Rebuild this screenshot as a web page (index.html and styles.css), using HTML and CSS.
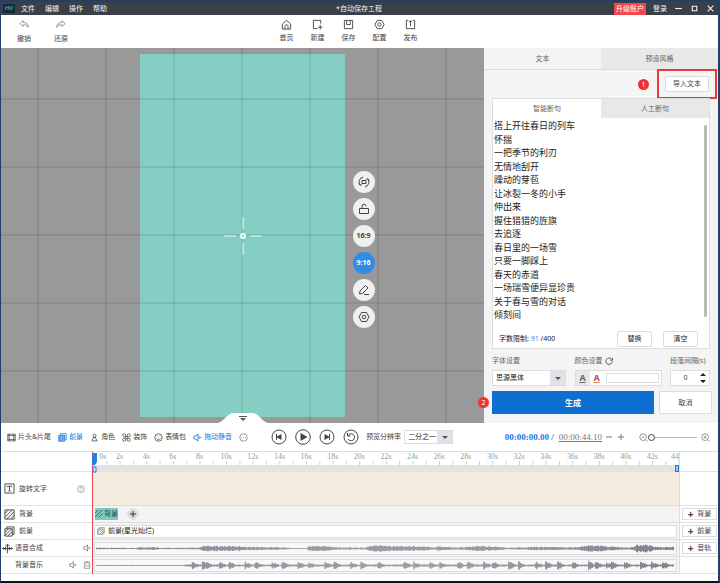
FILE: index.html
```html
<!DOCTYPE html>
<html lang="zh-CN">
<head>
<meta charset="utf-8">
<title>自动保存工程</title>
<link rel="stylesheet" href="styles.css">
</head>
<body>
<svg class="defs" aria-hidden="true">
  <symbol id="i-undo" viewBox="0 0 12 10"><path d="M5 1 1 4.500 5 8V6c3-.3 5 .6 6 3 .2-3.500-2-6-6-6z"/></symbol>
  <symbol id="i-home" viewBox="0 0 12 12"><path d="M1.500 5.500 6 1.500l4.500 4V11h-9zM4.300 11V8a1.700 1.700 0 0 1 3.400 0v3"/></symbol>
  <symbol id="i-new" viewBox="0 0 12 12"><path d="M9.500 5V1.500h-8v9H6M9 6.500v5M6.500 9h5"/></symbol>
  <symbol id="i-save" viewBox="0 0 12 12"><path d="M1.500 1.500h9v9h-9zM4 1.500V6h4V1.500"/></symbol>
  <symbol id="i-gear" viewBox="0 0 12 12"><path d="M3.500 1.500h5L11 6l-2.500 4.500h-5L1 6z"/><circle cx="6" cy="6" r="1.800"/></symbol>
  <symbol id="i-publish" viewBox="0 0 12 12"><path d="M3.500 1.500h-2v9h9v-9h-2M6 8V2M4.300 3.500 6 1.800l1.700 1.700"/></symbol>
  <symbol id="i-speaker" viewBox="0 0 10 10"><path d="M1 3.500h2L5.500 1v8L3 6.500H1zM7.500 3.500v3M9 4.500v1"/></symbol>
  <symbol id="i-hatch" viewBox="0 0 12 12"><path d="M1 1h10v10H1zM1 5l4-4M1 9l8-8M3 11l8-8M7 11l4-4"/></symbol>
  <symbol id="i-layers" viewBox="0 0 12 12"><path d="M3 3V1h8v8H9M1 3h8v8H1zM1 7l4-4M1 10.500 8.500 3M4 11l5-5"/></symbol>
</svg>
<div class="window">
  <header class="titlebar">
    <span class="logo">HV</span>
    <nav class="menu"><a href="#">文件</a><a href="#">编辑</a><a href="#">操作</a><a href="#">帮助</a></nav>
    <h1 class="title">*自动保存工程</h1>
    <div class="account">
      <button class="upgrade">升级账户</button>
      <button class="login">登录</button>
      <button class="win" aria-label="最小化"><svg viewBox="0 0 8 8"><path d="M1 4h6"/></svg></button>
      <button class="win" aria-label="最大化"><svg viewBox="0 0 8 8"><path d="M2 2h4v4H2z"/></svg></button>
      <button class="win" aria-label="关闭"><svg viewBox="0 0 8 8"><path d="m1.500 1.500 5 5m0-5-5 5"/></svg></button>
    </div>
  </header>

  <div class="toolbar">
    <div class="history">
      <button class="tool"><svg class="steel"><use href="#i-undo"/></svg>撤销</button>
      <button class="tool"><svg class="steel flip"><use href="#i-undo"/></svg>还原</button>
    </div>
    <div class="actions">
      <button class="tool"><svg><use href="#i-home"/></svg>首页</button>
      <button class="tool"><svg><use href="#i-new"/></svg>新建</button>
      <button class="tool"><svg><use href="#i-save"/></svg>保存</button>
      <button class="tool"><svg><use href="#i-gear"/></svg>配置</button>
      <button class="tool"><svg><use href="#i-publish"/></svg>发布</button>
    </div>
  </div>

  <main class="workspace">
    <section class="stage">
      <div class="canvas"></div>
      <svg class="cross" viewBox="0 0 38 38"><path d="M19 0v12M19 26v12M0 19h12M26 19h12"/><circle cx="19" cy="19" r="2"/></svg>
      <div class="floaters">
        <button aria-label="旋转"><svg viewBox="0 0 12 12"><path d="M4 4.500h4v3H4zM5 1.200A5 5 0 0 0 2 9M1 7.500 2 9.300l1.800-.8M7 10.800A5 5 0 0 0 10 3M11 4.500 10 2.700l-1.800.8"/></svg></button>
        <button aria-label="解锁"><svg viewBox="0 0 12 12"><path d="M1.500 5.500h9v5h-9zM4 5.500V3.200a2 2 0 0 1 4 0"/></svg></button>
        <button>16:9</button>
        <button class="on">9:16</button>
        <button aria-label="编辑"><svg viewBox="0 0 12 12"><path d="m2 7 5.500-5.500L10 4 4.500 9.500 1.500 10zM6 10.500h5"/></svg></button>
        <button aria-label="设置"><svg viewBox="0 0 12 12"><use href="#i-gear"/></svg></button>
      </div>
      <svg class="notch" viewBox="0 0 50 10"><path class="tab" d="M0 10C7 8 9 0 16 0h18c7 0 9 8 16 10z"/><path class="mark" d="M21 3h8v1h-8zM22 5h6l-3 3z"/></svg>
    </section>

    <aside class="panel">
      <div class="tabs"><button class="current">文本</button><button>预设风格</button></div>
      <div class="import">
        <span class="badge">1</span>
        <div class="highlight"><button class="plain">导入文本</button></div>
      </div>
      <div class="editor">
        <div class="subtabs"><button class="current">智能断句</button><button>人工断句</button></div>
        <div class="lyrics">
          <textarea aria-label="文本内容" spellcheck="false">搭上开往春日的列车
怀揣
一把季节的利刃
无情地刮开
躁动的芽苞
让冰裂一冬的小手
伸出来
握住猎猎的旌旗
去追逐
春日里的一场雪
只要一脚踩上
春天的赤道
一场瑞雪便异显珍贵
关于春与雪的对话
倾刻间</textarea>
          <span class="thumb"></span>
        </div>
        <div class="limit"><p>字数限制: <b>91</b> /400</p><button class="plain">替换</button><button class="plain">清空</button></div>
      </div>
      <div class="settings">
        <div class="field font-field">
          <label for="font">字体设置</label>
          <span class="select"><select id="font"><option>思源黑体</option></select></span>
        </div>
        <div class="field color-field">
          <label for="color">颜色设置 <svg viewBox="0 0 10 10"><path d="M8.300 3A4 4 0 1 0 9 5.500M9.500 1v3h-3"/></svg></label>
          <span class="colors"><button class="a-gray">A</button><button class="a-multi">A</button><input id="color" type="text"></span>
        </div>
        <div class="field gap-field">
          <label for="gap">段落间隔(s)</label>
          <span class="number"><input id="gap" type="text" value="0"><svg viewBox="0 0 6 12"><path d="M0 4h6L3 1zM0 8h6l-3 3z"/></svg></span>
        </div>
      </div>
      <div class="submit"><span class="badge two">2</span><button class="primary">生成</button><button class="cancel">取消</button></div>
    </aside>
  </main>

  <section class="playbar">
    <div class="modes">
      <button><svg viewBox="0 0 12 12"><path d="M1 1.500h10v9H1zM1 3.500h10M1 8.500h10M3 1.500v9M9 1.500v9"/></svg>片头&amp;片尾</button>
      <button class="blue"><svg viewBox="0 0 12 12"><path class="tint" d="M1 3h8v8H1z"/><use href="#i-layers"/></svg>前景</button>
      <button><svg viewBox="0 0 12 12"><circle cx="6" cy="3.500" r="2"/><path d="M4.500 6h3M5 6l-2.500 4.500h7L7 6"/></svg>角色</button>
      <button><svg viewBox="0 0 12 12"><circle cx="3" cy="3" r="2"/><circle cx="9" cy="3" r="2"/><circle cx="3" cy="9" r="2"/><circle cx="9" cy="9" r="2"/><path d="M4.500 4.500h3v3h-3z"/></svg>装饰</button>
      <button><svg viewBox="0 0 12 12"><circle cx="6" cy="6" r="5"/><path d="M3.500 7c1 2.500 4 2.500 5 0M4 3.500v1M8 3.500v1"/></svg>表情包</button>
      <button class="blue"><svg viewBox="0 0 10 10"><use href="#i-speaker"/></svg>拖动静音</button>
      <button aria-label="更多" class="pale"><svg viewBox="0 0 12 12"><circle cx="6" cy="6" r="5"/><path d="M3 6h1M5.500 6h1M8 6h1"/></svg></button>
    </div>
    <div class="transport">
      <button aria-label="上一个"><svg viewBox="0 0 16 16"><circle cx="8" cy="8" r="7"/><path class="fill" d="M5 5h1v2.500L10.500 5v6L6 8.500V11H5z"/></svg></button>
      <button aria-label="播放" class="play"><svg viewBox="0 0 16 16"><circle cx="8" cy="8" r="7.300"/><path class="fill" d="M5.500 4 12.500 8l-7 4z"/></svg></button>
      <button aria-label="下一个"><svg viewBox="0 0 16 16"><circle cx="8" cy="8" r="7"/><path class="fill" d="M11 5h-1v2.500L5.500 5v6L10 8.500V11h1z"/></svg></button>
      <button aria-label="重播"><svg viewBox="0 0 16 16"><circle cx="8" cy="8" r="7"/><path d="M5 6.500A3.500 3.500 0 1 1 5 10M4.500 4v3h3"/></svg></button>
    </div>
    <div class="quality"><label for="quality">预览分辨率</label><span class="select"><select id="quality"><option>二分之一</option></select></span></div>
    <div class="time"><b>00:00:00.00 /</b><u>00:00:44.10</u></div>
    <div class="step"><button aria-label="减"><svg viewBox="0 0 8 8"><path d="M1 4h6"/></svg></button><button aria-label="加"><svg viewBox="0 0 8 8"><path d="M1 4h6M4 1v6"/></svg></button></div>
    <div class="zoom">
      <svg viewBox="0 0 12 12"><circle cx="5.500" cy="5.500" r="4.500"/><path d="m9 9 2.500 2.500M3.500 5.500h4"/></svg>
      <input type="range" min="0" max="100" value="0" aria-label="缩放">
      <svg viewBox="0 0 12 12"><circle cx="5.500" cy="5.500" r="4.500"/><path d="m9 9 2.500 2.500M3.500 5.500h4M5.500 3.500v4"/></svg>
    </div>
  </section>

  <section class="timeline">
    <div class="names">
      <div class="name head"></div>
      <div class="name tall"><svg viewBox="0 0 12 12"><path d="M1 1h10v10H1zM3.500 4.500v-1h5v1M6 3.500v5M4.800 8.700h2.400"/></svg><span>旋转文字</span><svg class="small" viewBox="0 0 12 12"><circle cx="6" cy="6" r="5"/><path d="M4.500 5c0-2 3-2 3 0 0 1-1.500 1-1.500 2.200M6 8.500v.8"/></svg></div>
      <div class="name"><svg><use href="#i-hatch"/></svg><span>背景</span></div>
      <div class="name"><svg><use href="#i-layers"/></svg><span>前景</span></div>
      <div class="name near"><svg viewBox="0 0 12 12"><path d="M0 6h12M2 4.500v3M4 2.500h4M6 1v10M4 4v4M8 4v4M10 4.500v3"/></svg><span>语音合成</span><svg class="small"><use href="#i-speaker"/></svg></div>
      <div class="name deep"><span>背景音乐</span><svg class="small"><use href="#i-speaker"/></svg><svg class="small" viewBox="0 0 12 12"><path d="M1 2.500h10M4 2V1h4v1M2 2.500V11h8V2.500M4.500 5v4M7.500 5v4"/></svg></div>
    </div>
    <div class="tracks">
      <div class="ruler"><i>0s</i><i>2s</i><i>4s</i><i>6s</i><i>8s</i><i>10s</i><i>12s</i><i>14s</i><i>16s</i><i>18s</i><i>20s</i><i>22s</i><i>24s</i><i>26s</i><i>28s</i><i>30s</i><i>32s</i><i>34s</i><i>36s</i><i>38s</i><i>40s</i><i>42s</i><i>44</i></div>
      <div class="range"><span></span></div>
      <div class="track tall"></div>
      <div class="track"><div class="clip-bg"><svg viewBox="0 0 10 10"><path d="M0 4l4-4M0 9l9-9M5 9l5-5"/></svg><span>背景</span></div><button class="add" aria-label="添加背景"><svg viewBox="0 0 14 14"><path class="diamond" d="M7 0l7 7-7 7-7-7z"/><path d="M4 7h6M7 4v6"/></svg></button></div>
      <div class="track"><div class="clip"><svg class="layer"><use href="#i-layers"/></svg>前景(星光灿烂)</div></div>
      <div class="track"><div class="clip sound"><svg class="wave" id="speech" viewBox="0 0 582 12" preserveAspectRatio="none"><path/></svg></div></div>
      <div class="track"><div class="clip sound"><svg class="wave" id="music" viewBox="0 0 582 12" preserveAspectRatio="none"><path/></svg></div></div>
      <svg class="playhead" viewBox="0 0 6 20"><path class="flag" d="M0 0h5v9l-2 3H0z"/><path class="grip" d="M1 14h3v5H1z"/></svg>
    </div>
    <div class="adders">
      <div class="name head"></div><div class="name tall"></div>
      <div class="name"><button><b>+</b>背景</button></div>
      <div class="name"><button><b>+</b>前景</button></div>
      <div class="name"><button><b>+</b>音轨</button></div>
      <div class="name"></div>
    </div>
  </section>
</div>
<script src="app.js"></script>
</body>
</html>
```
FILE: styles.css
```css
* { box-sizing: border-box; }
body {
  margin: 0;
  font: 7px/10px "Noto Sans", "Noto Sans CJK SC", sans-serif;
  color: #444;
  background: #10131f;
}
button, input, select, textarea { font: inherit; color: inherit; margin: 0; padding: 0; border: 0; background: none; border-radius: 0; outline: 0; }
svg { fill: none; stroke: currentColor; stroke-width: 1; display: block; flex: none; }
.defs { position: absolute; width: 0; height: 0; }
.window {
  min-height: 100vh;
  display: flex;
  flex-direction: column;
  background: #fff;
  border: solid #263d68;
  border-width: 2px 2px 2px 1px;
  border-bottom-color: #10131f;
}

/* Title bar */
.titlebar { display: grid; grid-template-columns: 12px 1fr auto 1fr; align-items: center; height: 13px; padding: 0 3px 0 2px; background: #3a4047; color: #f2f2f2; }
.logo { font-size: 6px; font-weight: 700; text-align: center; color: #3b9fc4; background: #142b3b; line-height: 9px; }
.menu { display: flex; gap: 10px; padding-left: 6px; }
.menu a { color: inherit; text-decoration: none; }
.title { margin: 0 12px 0 0; font-size: 7px; font-weight: 400; }
.account { display: flex; justify-content: flex-end; align-items: center; gap: 7px; }
.upgrade { background: #f4464e; color: #fff; width: 32px; height: 12px; white-space: nowrap; }
.win svg { width: 9px; height: 9px; stroke-width: 1; }

/* Toolbar */
.toolbar { display: grid; grid-template-columns: 1fr auto 1fr; height: 33px; padding-top: 4px; }
.history { display: flex; gap: 19px; padding-left: 14px; }
.actions { display: flex; gap: 13px; margin-right: 22px; }
.tool { display: flex; flex-direction: column; align-items: center; gap: 3px; width: 18px; height: 26px; white-space: nowrap; }
.tool svg { width: 10px; height: 10px; }
.actions .tool svg { width: 11px; height: 11px; }
.history .tool { gap: 5px; }
.steel { color: #7382a6; }
.flip { transform: scaleX(-1); }

/* Workspace */
.workspace { flex: 1; display: grid; grid-template-columns: minmax(0, 1fr) 234px; }
.stage { position: relative; display: flex; justify-content: center; padding: 6px 0; background: #999; }
.stage::after {
  content: "";
  position: absolute;
  inset: 0;
  background:
    linear-gradient(90deg, transparent 33px, rgba(0, 0, 0, .16) 33px 34px, transparent 34px) center / 68px 100%,
    linear-gradient(transparent 33px, rgba(0, 0, 0, .16) 33px 34px, transparent 34px) center / 100% 68px;
}
.canvas { aspect-ratio: 9 / 16; background: #86cec3; }
.cross { position: absolute; width: 38px; height: 38px; left: calc(50% - 19px); top: calc(50% - 19px); z-index: 1; color: #e3fff8; }
.cross circle { stroke-width: 2; }
.floaters { position: absolute; z-index: 2; left: calc(50% + 110px); top: calc(50% - 65px); display: grid; gap: 5px; }
.floaters button { width: 22px; height: 22px; border-radius: 50%; background: #f0f0f0; display: grid; place-items: center; font-weight: 700; }
.floaters svg { width: 12px; height: 12px; }
.floaters .on { background: #318be9; color: #fff; }
.notch { position: absolute; z-index: 2; width: 50px; height: 10px; left: calc(50% - 25px); bottom: 0; stroke: none; }
.notch .tab { fill: #fff; }
.notch .mark { fill: #555; }

/* Text panel */
.panel { display: flex; flex-direction: column; background: #f4f4f4; min-width: 0; }
.tabs, .subtabs { display: grid; grid-template-columns: 1fr 1fr; color: #666; }
.tabs button { height: 22px; background: #e8e8e8; border-bottom: 1px solid #ddd; }
.tabs .current { background: #f4f4f4; }
.import { display: flex; justify-content: flex-end; align-items: center; gap: 8px; height: 28px; padding-right: 1px; }
.badge { width: 11px; height: 11px; border-radius: 50%; background: #ed3338; color: #fff; text-align: center; line-height: 11px; }
.highlight { margin: -2px 0; width: 60px; height: 30px; border: 2px solid #e43c3d; display: grid; place-items: center; }
.plain { background: #fff; border: 1px solid #ddd; border-radius: 2px; height: 16px; width: 44px; }
.editor { flex: 1; display: flex; flex-direction: column; margin: 0 8px; background: #fff; border: 1px solid #ddd; }
.subtabs button { height: 19px; }
.subtabs button:last-child { background: #e8e8e8; }
.lyrics { flex: 1; display: flex; gap: 2px; padding: 1px 2px 0 1px; }
.lyrics textarea { flex: 1; min-width: 0; resize: none; overflow: hidden; font-size: 9px; line-height: 1.5; color: #222; }
.thumb { width: 3px; margin: 6px 0 14px; border-radius: 2px; background: #b9b9b9; }
.limit { display: flex; gap: 11px; padding: 0 11px 1px 6px; color: #222; align-items: center; }
.limit p { margin: 0; flex: 1; }
.limit b { color: #3c8be0; font-weight: 400; }
.limit .plain { width: 35px; }
.settings { display: flex; justify-content: space-between; padding: 7px 8px 0; }
.field { display: flex; flex-direction: column; gap: 4px; }
.field label { display: flex; gap: 2px; align-items: center; white-space: nowrap; color: #666; }
.field label svg { width: 8px; height: 8px; color: #333; stroke-width: 1; }
.select { position: relative; display: flex; background: #fff; border: 1px solid #ddd; height: 16px; color: #222; }
.select::after { content: ""; width: 15px; background: #dfe3e9; }
.select::before { content: ""; position: absolute; right: 4px; top: 6px; border: 3px solid transparent; border-top-color: #555; }
.select select { flex: 1; appearance: none; padding-left: 3px; min-width: 0; }
.font-field { width: 74px; }
.color-field { width: 87px; }
.gap-field { width: 40px; }
.colors { display: flex; height: 16px; border: 1px solid #ddd; background: #fff; }
.colors button { width: 14px; font-size: 9px; font-weight: 700; text-decoration: underline; color: #666; }
.colors .a-gray { background: #e8e8e8; }
.colors .a-multi { color: #9b4c7c; text-decoration-color: #ec8a32; }
.colors input { flex: 1; min-width: 0; margin: 2px; border: 1px solid #ddd; }
.number { display: flex; align-items: center; height: 16px; padding-right: 3px; background: #fff; border: 1px solid #ddd; }
.number input { flex: 1; min-width: 0; text-align: center; }
.number svg { width: 6px; height: 12px; fill: #222; stroke: none; }
.submit { position: relative; display: grid; grid-template-columns: 162px 1fr; gap: 5px; padding: 5px 6px 9px 8px; }
.submit button { height: 23px; }
.primary { background: #0e6fd3; color: #fff; font-size: 8px; font-weight: 700; }
.cancel { background: #fff; border: 1px solid #ddd; }
.two { position: absolute; left: -6px; top: 11px; z-index: 3; }

/* Playback bar */
.playbar { display: flex; align-items: center; height: 28px; padding: 0 8px 0 6px; white-space: nowrap; }
.modes { display: flex; gap: 7px; }
.modes button { display: flex; align-items: center; gap: 2px; }
.modes svg { width: 9px; height: 9px; }
.modes .tint { fill: #8fc0f2; stroke: none; }
.blue { color: #1879dc; }
.pale { color: #777; }
.transport { display: flex; align-items: center; gap: 8px; margin-left: 23px; }
.transport svg { width: 16px; height: 16px; }
.transport .fill { fill: currentColor; stroke: none; }
.quality { display: flex; align-items: center; gap: 3px; margin-left: 7px; }
.quality .select { width: 49px; height: 14px; }
.quality .select::before { top: 5px; }
.time { display: flex; gap: 5px; margin-left: auto; font: 9px/12px "Liberation Serif", serif; }
.time b { color: #1879dc; }
.time u { color: #777; }
.step { display: flex; gap: 4px; margin-left: 3px; color: #777; }
.step svg { width: 8px; height: 8px; }
.zoom { display: flex; align-items: center; margin-left: 14px; color: #777; }
.zoom svg { width: 9px; height: 9px; }
.zoom input { width: 49px; height: 10px; appearance: none; margin-right: 4px; background: linear-gradient(#bbb, #bbb) center / 100% 1px no-repeat; }
.zoom input::-webkit-slider-thumb { appearance: none; width: 7px; height: 7px; border: 1px solid #444; border-radius: 50%; background: #fff; }

/* Timeline */
.timeline { display: grid; grid-template-columns: 91px minmax(0, 1fr) 38px; padding-bottom: 7px; border-top: 1px solid #ddd; }
.name { display: flex; align-items: center; gap: 4px; height: 17px; padding: 0 7px 0 3px; border-bottom: 1px solid #e2e2e2; }
.name.head { height: 20px; }
.name.tall, .track.tall { height: 34px; }
.name svg { width: 11px; height: 11px; }
.name span { flex: 1; }
.name.near { padding: 0 1px; gap: 2px; }
.name.deep { padding: 0 1px 0 14px; gap: 6px; }
.name .small { width: 8px; height: 8px; color: #777; }
.tracks { position: relative; border-right: 1px solid #ddd; border-left: 1px solid #e5484d; }
.ruler {
  display: grid;
  grid-template-columns: minmax(0, 1fr) repeat(21, minmax(0, 2fr)) minmax(0, 1fr);
  height: 13px;
  overflow: hidden;
  text-align: center;
  font: 8px/9px "Liberation Serif", serif;
  color: #999;
  background: linear-gradient(90deg, #ccc 1px, transparent 1px) 0 100% / calc(100% / 44) 4px repeat-x;
}
.ruler i { font-style: normal; }
.ruler i:first-child, .ruler i:last-child { text-align: right; }
.range { display: flex; justify-content: flex-end; height: 7px; background: #e3e3e3; }
.range span { width: 4px; border: 1px solid #1879dc; background: #9bc8f5; }
.track { display: flex; align-items: center; gap: 8px; height: 17px; padding: 0 2px 0 1px; background: #f4f4f4; border-bottom: 1px solid #ddd; }
.track.tall { background: #f3ecdf; }
.clip-bg { display: flex; align-items: center; gap: 1px; height: 12px; margin-left: 1px; background: #7fcbbb; color: #234e49; white-space: nowrap; }
.clip-bg svg { width: 8px; height: 8px; }
.add svg { width: 14px; height: 14px; stroke: #333; }
.add .diamond { fill: #ddd; stroke: none; }
.clip { flex: 1; display: flex; align-items: center; gap: 3px; height: 13px; padding-left: 2px; border: 1px solid #ddd; background: #fff; color: #222; min-width: 0; }
.layer { width: 8px; height: 8px; color: #777; }
.sound { padding: 0; background: #f8f8f8; }
.wave { width: 100%; height: 11px; color: #777b88; }
.playhead { position: absolute; left: -1px; top: 1px; width: 6px; height: 20px; stroke: none; }
.playhead .flag { fill: #277fd9; }
.playhead .grip { fill: #d9ecff; stroke: #1879dc; }
.adders .name { padding: 0 1px 0 2px; }
.adders button { display: flex; justify-content: center; align-items: center; gap: 4px; width: 100%; height: 12px; border: 1px solid #ddd; }
.adders b { font-size: 10px; }
```
FILE: app.js
```js
// Amplitude envelope of the speech track: [position, amplitude] pairs.
const speech = [[0, 1], [40, .6], [44, 1.6], [62, 1.6], [66, .7], [104, 1], [108, 3], [146, 3], [150, 2], [185, 1.6],
  [196, .6], [212, .6], [214, 3.2], [232, 3], [238, 1.6], [270, 1], [274, 3], [288, 4.4], [300, 3], [320, 2.8],
  [340, 1.6], [344, 2.8], [362, 1.2], [386, 3], [406, 2], [412, .8], [440, 2.2], [480, 1.4], [488, 3], [500, 4], [514, 2.4],
  [535, 1], [543, 4.4], [556, 4.2], [562, 1.8], [581, 2]];

// Beat positions of the music track.
const beats = [97, 107, 111, 124, 134, 150, 160, 177, 187, 203, 214, 230, 239, 256, 266, 283, 309, 319, 335, 345, 363, 373,
  389, 398, 414, 424, 441, 451, 463, 478, 494, 501, 512, 517, 530, 546, 557, 568];

const noise = n => Math.abs(Math.sin(n * 12.9898) * 43758.5453) % 1;

function envelope(points, x) {
  const i = Math.max(1, points.findIndex(p => p[0] >= x));
  const [x0, y0] = points[i - 1];
  const [x1, y1] = points[i];
  return y0 + (y1 - y0) * (x - x0) / (x1 - x0);
}

function beatLevel(x) {
  const base = x < 90 ? .5 : 1.2;
  return beats.reduce((level, b, i) => {
    const d = x - b;
    return d >= 0 && d < 7 ? Math.max(level, (4 + noise(i) * 1.4) * (1 - d / 9)) : level;
  }, base);
}

function draw(id, level) {
  let d = "";
  for (let x = 1; x < 580; x++) {
    const a = Math.max(.4, level(x) * (.5 + noise(x) * .5));
    d += `M${x + .5} ${(6 - a).toFixed(1)}V${(6 + a).toFixed(1)}`;
  }
  document.querySelector(`#${id} path`).setAttribute("d", d);
}

draw("speech", x => envelope(speech, x));
draw("music", beatLevel);
```
